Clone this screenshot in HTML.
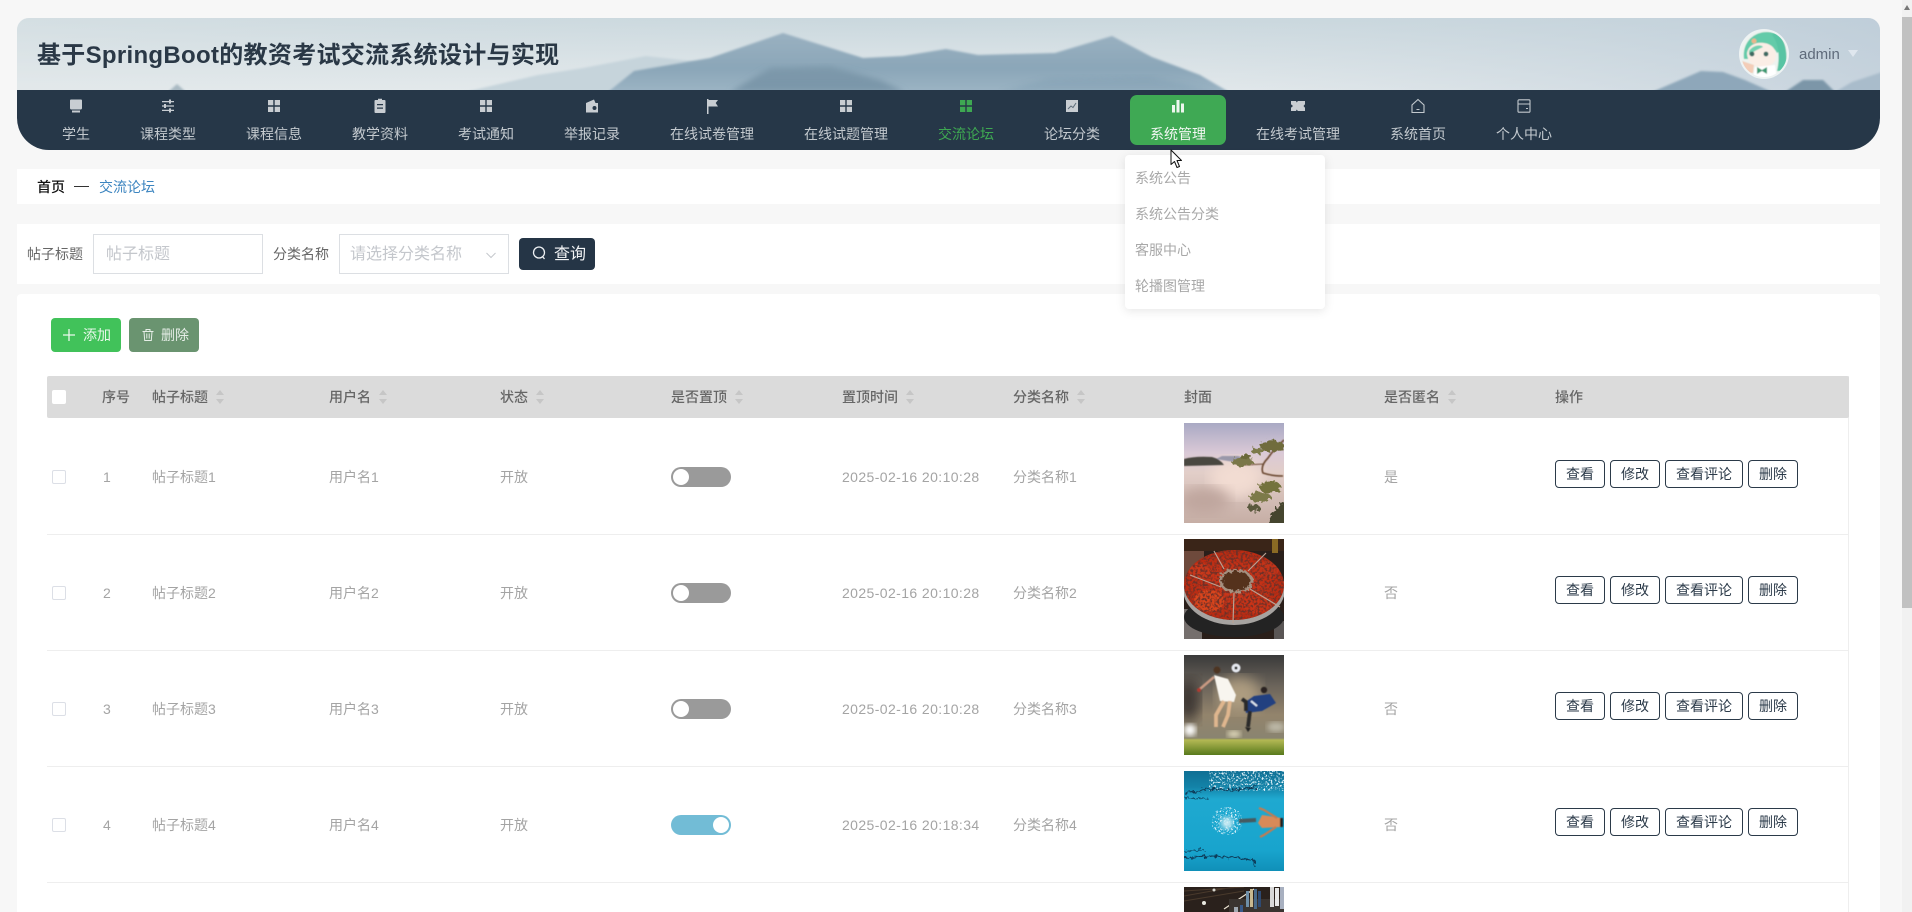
<!DOCTYPE html>
<html lang="zh"><head><meta charset="utf-8"><title>交流论坛</title>
<style>
*{box-sizing:border-box;margin:0;padding:0}
html,body{width:1912px;height:912px;overflow:hidden;background:#f7f7f7}
body{position:relative;font:14px/20px "Liberation Sans","Noto Sans CJK SC",sans-serif;color:#999}
.a{position:absolute;white-space:nowrap}
.card{position:absolute;left:17px;width:1863px;background:#fff}
.nav{position:absolute;top:95px;height:50px;text-align:center;color:#c3c9ce;font-size:14px;line-height:20px;white-space:nowrap}
.nav span{position:absolute;left:0;right:0;top:29px}
.nav svg{position:absolute;left:50%;margin-left:-8px;top:3px;width:16px;height:16px;fill:#c8cdd2;stroke:none}
.th{position:absolute;top:0;height:42px;line-height:42px;font-weight:500;color:#666;white-space:nowrap}
.th i{position:absolute;top:14px;width:8px;height:14px}
.th i:before,.th i:after{content:"";position:absolute;left:0;border:4px solid transparent}
.th i:before{border-bottom:5px solid #c6c6c6;border-top-width:0;top:0}
.th i:after{bottom:0;border-top:5px solid #c6c6c6;border-bottom-width:0}
.row{position:absolute;left:47px;width:1802px;height:117px;border-bottom:1px solid #eee}
.t{position:absolute;top:49px;line-height:20px;color:#a4a4a4;white-space:nowrap}
.d{letter-spacing:.4px}
.cb{position:absolute;left:5px;top:52px;width:14px;height:14px;border:1px solid #dcdfe6;border-radius:2px;background:#fff}
.sw{position:absolute;left:624px;top:49px;width:60px;height:20px;border-radius:10px;background:#9a9a9a}
.sw:after{content:"";position:absolute;left:2px;top:2px;width:16px;height:16px;border-radius:50%;background:#fff}
.sw.on{background:#72bcd6}
.sw.on:after{left:42px}
.pic{position:absolute;left:1137px;top:5px;width:100px;height:100px;display:block}
.b{position:absolute;top:42px;height:28px;line-height:26px;text-align:center;border:1px solid #2b3a49;border-radius:4px;background:#fff;color:#2b3a49;white-space:nowrap}
.dd{position:absolute;left:1135px;color:#a8a8a8;white-space:nowrap;line-height:20px}
</style></head><body>

<svg width="0" height="0" style="position:absolute;left:0;top:0">
<defs>
<filter id="rough" x="-10%" y="-10%" width="120%" height="120%"><feTurbulence type="fractalNoise" baseFrequency=".28" numOctaves="2" seed="3" result="n"/><feDisplacementMap in="SourceGraphic" in2="n" scale="7"/></filter>
<filter id="speckD" x="0" y="0" width="100%" height="100%"><feTurbulence type="fractalNoise" baseFrequency=".42" numOctaves="2" seed="8"/><feColorMatrix values="0 0 0 0 .16  0 0 0 0 .03  0 0 0 0 .02  0 0 0 4 -1.7"/></filter>
<filter id="speckW" x="0" y="0" width="100%" height="100%"><feTurbulence type="fractalNoise" baseFrequency=".55" numOctaves="2" seed="5"/><feColorMatrix values="0 0 0 0 .85  0 0 0 0 .95  0 0 0 0 1  0 0 0 5 -2.6"/></filter>
<filter id="soft"><feGaussianBlur stdDeviation=".45"/></filter>
<filter id="soft3"><feGaussianBlur stdDeviation="3"/></filter>
<filter id="soft7"><feGaussianBlur stdDeviation="7"/></filter>
</defs>
</svg>

<!-- header -->
<div class="a" style="left:17px;top:18px;width:1863px;height:132px;border-radius:12px 12px 32px 32px;overflow:hidden">
<svg width="1863" height="72" viewBox="17 18 1863 72" style="position:absolute;left:0;top:0;display:block">
<defs>
<linearGradient id="sky" x1="0" y1="0" x2="0" y2="1"><stop offset="0" stop-color="#c9d7dd"/><stop offset=".55" stop-color="#d9e2e6"/><stop offset="1" stop-color="#e6ebed"/></linearGradient>
<linearGradient id="skyH" x1="0" y1="0" x2="1" y2="0"><stop offset="0" stop-color="#dfe6e8" stop-opacity=".5"/><stop offset=".5" stop-color="#d6e0e4" stop-opacity="0"/><stop offset="1" stop-color="#bccbd8" stop-opacity=".75"/></linearGradient>
<linearGradient id="mt" x1="0" y1="0" x2="0" y2="1"><stop offset="0" stop-color="#9ab1c1"/><stop offset=".6" stop-color="#8ba6b8"/><stop offset="1" stop-color="#9cb4c4"/></linearGradient>
<linearGradient id="mt2" x1="0" y1="0" x2="0" y2="1"><stop offset="0" stop-color="#7f9aac"/><stop offset="1" stop-color="#6f8ca0" stop-opacity=".7"/></linearGradient>
<filter id="bl"><feGaussianBlur stdDeviation="1"/></filter>
</defs>
<rect x="17" y="18" width="1863" height="72" fill="url(#sky)"/>
<rect x="17" y="18" width="1863" height="72" fill="url(#skyH)"/>
<polygon points="465,92 538,75 583,68 646,56 700,62 760,92" fill="#c6d4db" filter="url(#bl)"/>
<polygon points="608,92 634,71 710,58 783,33 863,58 903,56 946,49 978,55 1055,53 1112,36 1152,57 1200,75 1229,92" fill="url(#mt)" filter="url(#bl)"/>
<polygon points="730,92 770,68 830,66 880,80 905,92" fill="url(#mt2)" filter="url(#soft3)"/>
<polygon points="1000,92 1050,78 1150,76 1215,92" fill="#7d9bb0" opacity=".4" filter="url(#soft3)"/>
<polygon points="168,92 177,84 186,92" fill="#a9b9c2" filter="url(#bl)"/>
<polygon points="1835,92 1852,82 1882,72 1882,92" fill="#a9bccb" filter="url(#bl)"/>
<polygon points="1652,92 1680,80 1701,71 1723,72 1745,80 1772,92" fill="#8ea7ba" filter="url(#bl)"/>
<polygon points="1785,92 1803,80 1823,80 1835,92" fill="#7c96a8" filter="url(#bl)"/>
</svg>
<div style="position:absolute;left:0;top:72px;width:1863px;height:60px;background:#263748"></div>
</div>
<div class="a" style="left:37px;top:39px;font-size:24px;line-height:34px;font-weight:700;color:#2a3846;letter-spacing:.3px">基于SpringBoot的教资考试交流系统设计与实现</div>

<!-- avatar -->
<svg class="a" style="left:1739px;top:29px" width="50" height="50" viewBox="0 0 50 50">
<defs><clipPath id="av"><circle cx="25" cy="25" r="23"/></clipPath></defs>
<circle cx="25" cy="25" r="25" fill="#eef3f3"/>
<g clip-path="url(#av)"><g filter="url(#soft)">
<rect width="50" height="50" fill="#eef3ef"/>
<path d="M5 30C3 14 14 3 28 3C38 3 44 8 46 18L38 24C34 16 26 14 20 15C12 17 9 24 9 30Z" fill="#63cba9"/>
<path d="M36 3C46 8 50 24 46 42L38 42C41 30 40 14 33 6Z" fill="#58c4a3"/>
<path d="M8 24C10 15 18 13 25 14C33 15 37 20 37 27C37 34 31 38 23 38C14 38 8 32 8 24Z" fill="#fbeee6"/>
<path d="M10 22C14 16 22 15 24 18C20 20 15 22 10 26Z" fill="#72d0b0"/>
<circle cx="13" cy="25" r="2.400" fill="#3e6a62"/><circle cx="27" cy="25" r="2.400" fill="#3e6a62"/>
<path d="M3 32L15 36 14 44 6 44Z" fill="#f3cdb8"/>
<path d="M16 38L36 36 38 50 14 50Z" fill="#fff"/>
<path d="M18 38L23 41 28 38 28 45 23 42 18 45Z" fill="#3c9a72"/>
<circle cx="15" cy="12" r="2.500" fill="#e9b58b"/>
</g></g></svg>
<div class="a" style="left:1799px;top:45px;font-size:15px;line-height:20px;color:#5f6b7b">admin</div>
<div class="a" style="left:1848px;top:50px;width:0;height:0;border-left:5px solid transparent;border-right:5px solid transparent;border-top:7px solid #dfe7ee"></div>

<!-- nav -->
<div class="nav" style="left:42px;width:68px"><svg viewBox="0 0 16 16"><path d="M3 1.500h10a1 1 0 0 1 1 1V10a1.500 1.500 0 0 1-1.500 1.500h-9A1.500 1.500 0 0 1 2 10V2.500a1 1 0 0 1 1-1zM4 12.500h8V14.500H4z"/></svg><span>学生</span></div>
<div class="nav" style="left:120px;width:96px"><svg viewBox="0 0 16 16"><path d="M2 3h7V1.500h2V3h3v1.200h-3v1.400H9V4.200H2zM2 7.400h2V6h2v1.400h8v1.200H6V10H4V8.600H2zM2 11.800h7v-1.400h2v1.400h3V13h-3v1.500H9V13H2z"/></svg><span>课程类型</span></div>
<div class="nav" style="left:226px;width:96px"><svg viewBox="0 0 16 16"><path d="M2 2h5.300v5.300H2zM8.700 2H14v5.300H8.700zM2 8.700h5.300V14H2zM8.700 8.700H14V14H8.700z"/></svg><span>课程信息</span></div>
<div class="nav" style="left:332px;width:96px"><svg viewBox="0 0 16 16"><path fill-rule="evenodd" d="M6 .8h4V2h2.500A1 1 0 0 1 13.500 3v11a1 1 0 0 1-1 1h-9a1 1 0 0 1-1-1V3a1 1 0 0 1 1-1H6zM5 6v1.200h6V6zM5 9.500v1.200h6V9.500z"/></svg><span>教学资料</span></div>
<div class="nav" style="left:438px;width:96px"><svg viewBox="0 0 16 16"><path d="M2 2h5.300v5.300H2zM8.700 2H14v5.300H8.700zM2 8.700h5.300V14H2zM8.700 8.700H14V14H8.700z"/></svg><span>考试通知</span></div>
<div class="nav" style="left:544px;width:96px"><svg viewBox="0 0 16 16"><path fill-rule="evenodd" d="M2 5l8-3.500 1.500 3.500H14v9.500H2zM10.500 8a2 2 0 1 0 0 4 2 2 0 0 0 0-4z"/></svg><span>举报记录</span></div>
<div class="nav" style="left:650px;width:124px"><svg viewBox="0 0 16 16"><path d="M3 1h1.500v1H14l-2.300 3L14 8.500H4.500V16H3z"/></svg><span>在线试卷管理</span></div>
<div class="nav" style="left:784px;width:124px"><svg viewBox="0 0 16 16"><path d="M2 2h5.300v5.300H2zM8.700 2H14v5.300H8.700zM2 8.700h5.300V14H2zM8.700 8.700H14V14H8.700z"/></svg><span>在线试题管理</span></div>
<div class="nav" style="left:918px;width:96px;color:#3ea852"><svg viewBox="0 0 16 16" style="fill:#3ea852"><path d="M2 2h5.300v5.300H2zM8.700 2H14v5.300H8.700zM2 8.700h5.300V14H2zM8.700 8.700H14V14H8.700z"/></svg><span>交流论坛</span></div>
<div class="nav" style="left:1024px;width:96px"><svg viewBox="0 0 16 16"><path d="M2 2h12v12H2z"/><path d="M4 11l3-3 2 1.500L12 5" fill="none" stroke="#5d6c79" stroke-width="1"/></svg><span>论坛分类</span></div>
<div class="nav" style="left:1130px;width:96px;background:#3fa954;border-radius:7px;color:#f2f7f2"><svg viewBox="0 0 16 16" style="fill:#eef6ee"><path d="M2 7h3v7.500H2zM6.500 2h3v12.500h-3zM11 5.500h3v9h-3z"/></svg><span>系统管理</span></div>
<div class="nav" style="left:1250px;width:96px"><svg viewBox="0 0 16 16"><path d="M1 3h5l.8 1.500L7.800 3H15v3.200l-1.500 1.800L15 9.800V13H7.800l-1-1.500L6 13H1V9.800L3 8 1 6.200z"/></svg><span>在线考试管理</span></div>
<div class="nav" style="left:1370px;width:96px"><svg viewBox="0 0 16 16" style="fill:none;stroke:#c3c9ce;stroke-width:1.100"><path d="M8 1.500L14 7v7.500H2V7zM6.500 11.500h3"/></svg><span>系统首页</span></div>
<div class="nav" style="left:1476px;width:96px"><svg viewBox="0 0 16 16" style="fill:none;stroke:#c3c9ce;stroke-width:1.100"><path d="M3 1.800h10a1 1 0 0 1 1 1V13.200a1 1 0 0 1-1 1H3a1 1 0 0 1-1-1V2.800a1 1 0 0 1 1-1zM2 6h12M10 10.500h2"/></svg><span>个人中心</span></div>

<!-- breadcrumb -->
<div class="card" style="top:169px;height:35px"></div>
<div class="a" style="left:37px;top:177px;color:#111;font-weight:500">首页</div>
<div class="a" style="left:74px;top:186px;width:15px;height:1px;background:#333"></div>
<div class="a" style="left:99px;top:177px;color:#3c85c0">交流论坛</div>

<!-- search -->
<div class="card" style="top:224px;height:60px"></div>
<div class="a" style="left:27px;top:244px;color:#666">帖子标题</div>
<div class="a" style="left:93px;top:234px;width:170px;height:40px;border:1px solid #dcdfe3;background:#fff;padding-left:12px;line-height:40px;color:#c4c7cc;font-size:16px">帖子标题</div>
<div class="a" style="left:273px;top:244px;color:#666">分类名称</div>
<div class="a" style="left:339px;top:234px;width:170px;height:40px;border:1px solid #dcdfe3;background:#fff;padding-left:10px;line-height:40px;color:#c4c7cc;font-size:16px">请选择分类名称</div>
<svg class="a" style="left:485px;top:249px" width="12" height="12" viewBox="0 0 12 12"><path d="M1.500 4L6 8.500 10.500 4" fill="none" stroke="#c4c7cc" stroke-width="1"/></svg>
<div class="a" style="left:519px;top:238px;width:76px;height:32px;background:#253546;border-radius:4px"></div>
<svg class="a" style="left:532px;top:245px" width="15" height="16" viewBox="0 0 15 16"><circle cx="7" cy="7.500" r="5.500" fill="none" stroke="#eef1f4" stroke-width="1.300"/><path d="M10.500 11.500l2 2.500" stroke="#eef1f4" stroke-width="1.300"/></svg>
<div class="a" style="left:554px;top:244px;color:#f2f4f6;font-size:16px;line-height:22px">查询</div>

<!-- main -->
<div class="card" style="top:294px;height:618px;border-radius:4px 4px 0 0"></div>
<div class="a" style="left:51px;top:318px;width:70px;height:34px;background:#41c25a;border-radius:4px"></div>
<svg class="a" style="left:62px;top:328px" width="14" height="14" viewBox="0 0 14 14"><path d="M7 1v12M1 7h12" stroke="#eaf8ec" stroke-width="1.300"/></svg>
<div class="a" style="left:83px;top:325px;color:#e8f7ea;font-size:14px">添加</div>
<div class="a" style="left:129px;top:318px;width:70px;height:34px;background:#6a9470;border-radius:4px"></div>
<svg class="a" style="left:141px;top:328px" width="14" height="14" viewBox="0 0 14 14" fill="none" stroke="#e6eee7" stroke-width="1"><path d="M1.500 3.500h11M5 3.500V1.500h4v2M3 3.500l.7 9h6.600l.7-9M5.800 5.500v5M8.200 5.500v5"/></svg>
<div class="a" style="left:161px;top:325px;color:#e6eee7;font-size:14px">删除</div>

<!-- table -->
<div class="a" style="left:47px;top:376px;width:1802px;height:536px;border-right:1px solid #eee"></div>
<div class="a" style="left:47px;top:376px;width:1802px;height:42px;background:#dbdbdb;border-radius:2px">
<div style="position:absolute;left:5px;top:14px;width:14px;height:14px;background:#fff;border-radius:2px"></div>
<div class="th" style="left:55px">序号</div>
<div class="th" style="left:105px">帖子标题<i style="left:64px"></i></div>
<div class="th" style="left:282px">用户名<i style="left:50px"></i></div>
<div class="th" style="left:453px">状态<i style="left:36px"></i></div>
<div class="th" style="left:624px">是否置顶<i style="left:64px"></i></div>
<div class="th" style="left:795px">置顶时间<i style="left:64px"></i></div>
<div class="th" style="left:966px">分类名称<i style="left:64px"></i></div>
<div class="th" style="left:1137px">封面</div>
<div class="th" style="left:1337px">是否匿名<i style="left:64px"></i></div>
<div class="th" style="left:1508px">操作</div>
</div>

<div class="row" style="top:418px">
<div class="cb"></div><div class="t" style="left:56px">1</div><div class="t" style="left:105px">帖子标题1</div><div class="t" style="left:282px">用户名1</div><div class="t" style="left:453px">开放</div><div class="sw"></div><div class="t d" style="left:795px">2025-02-16 20:10:28</div><div class="t" style="left:966px">分类名称1</div>
<svg class="pic" viewBox="0 0 100 100"><defs><linearGradient id="p1" x1="0" y1="0" x2="0" y2="1"><stop offset="0" stop-color="#a9a9c4"/><stop offset=".3" stop-color="#dac9d6"/><stop offset=".5" stop-color="#e2cec8"/><stop offset="1" stop-color="#c6aea5"/></linearGradient><clipPath id="cp1"><rect width="100" height="100"/></clipPath></defs><g clip-path="url(#cp1)"><rect width="100" height="100" fill="url(#p1)"/><ellipse cx="52" cy="55" rx="26" ry="20" fill="#f2dcd2" filter="url(#soft7)"/><ellipse cx="20" cy="78" rx="26" ry="14" fill="#bfa69e" filter="url(#soft7)"/><g filter="url(#soft)"><path d="M32 36l6-3 16 0 10 3-14 3Z" fill="#9a98aa"/><path d="M0 36Q10 33 28 34Q36 36 40 42L0 43Z" fill="#484640"/><path d="M100 17Q90 26 84 35Q76 43 79 50Q88 53 99 53" fill="none" stroke="#6c4a33" stroke-width="1.600"/><path d="M80 41L60 42" stroke="#6c4a33" stroke-width="1"/></g><g filter="url(#rough)"><ellipse cx="88" cy="23" rx="12" ry="6" fill="#6f6c3c"/><ellipse cx="74" cy="28" rx="7" ry="3" fill="#7c7948"/><ellipse cx="58" cy="39" rx="11" ry="4" fill="#7a7748"/><ellipse cx="62" cy="34" rx="6" ry="2.500" fill="#6a6838"/><ellipse cx="86" cy="64" rx="11" ry="6" fill="#73723d"/><ellipse cx="76" cy="74" rx="11" ry="5" fill="#7c7a48"/><ellipse cx="70" cy="85" rx="6" ry="4" fill="#5a583c"/><path d="M84 102Q88 84 102 78V102Z" fill="#45452f"/></g></g></svg>
<div class="t" style="left:1337px">是</div>
<div class="b" style="left:1508px;width:50px">查看</div><div class="b" style="left:1563px;width:50px">修改</div><div class="b" style="left:1618px;width:78px">查看评论</div><div class="b" style="left:1701px;width:50px">删除</div>
</div>

<div class="row" style="top:534px">
<div class="cb"></div><div class="t" style="left:56px">2</div><div class="t" style="left:105px">帖子标题2</div><div class="t" style="left:282px">用户名2</div><div class="t" style="left:453px">开放</div><div class="sw"></div><div class="t d" style="left:795px">2025-02-16 20:10:28</div><div class="t" style="left:966px">分类名称2</div>
<svg class="pic" viewBox="0 0 100 100"><defs><radialGradient id="p2" cx=".5" cy=".5" r=".55"><stop offset="0" stop-color="#cf3a1e"/><stop offset="1" stop-color="#b8280f"/></radialGradient><clipPath id="cp2"><ellipse cx="50" cy="46" rx="50" ry="35"/></clipPath></defs><rect width="100" height="100" fill="#2a1f1a"/><rect width="100" height="12" fill="#3a2518"/><rect x="88" width="6" height="14" fill="#8a6a24"/><rect y="12" width="20" height="30" fill="#6e4a3c"/><rect y="70" width="18" height="30" fill="#756f6d"/><rect x="90" y="82" width="10" height="18" fill="#5a5655"/><ellipse cx="50" cy="78" rx="50" ry="20" fill="#232323"/><ellipse cx="50" cy="50" rx="51" ry="36" fill="#a6a3a0"/><ellipse cx="50" cy="46" rx="50" ry="35" fill="url(#p2)"/><g clip-path="url(#cp2)"><ellipse cx="25" cy="62" rx="15" ry="11" fill="#d9441c"/><ellipse cx="74" cy="65" rx="15" ry="10" fill="#c93317"/><ellipse cx="16" cy="32" rx="11" ry="8" fill="#c9371a"/><ellipse cx="84" cy="30" rx="11" ry="8" fill="#c43318"/><rect width="100" height="100" filter="url(#speckD)"/></g><g filter="url(#rough)"><ellipse cx="52" cy="42" rx="17" ry="12" fill="#a4907f"/><ellipse cx="52" cy="42" rx="14" ry="10" fill="#55301f"/></g><path d="M50 54L49 84M66 50L96 68M37 48L6 36M64 32L82 14M40 30L30 12" stroke="#b9a193" stroke-width="1.200" fill="none"/></svg>
<div class="t" style="left:1337px">否</div>
<div class="b" style="left:1508px;width:50px">查看</div><div class="b" style="left:1563px;width:50px">修改</div><div class="b" style="left:1618px;width:78px">查看评论</div><div class="b" style="left:1701px;width:50px">删除</div>
</div>

<div class="row" style="top:650px">
<div class="cb"></div><div class="t" style="left:56px">3</div><div class="t" style="left:105px">帖子标题3</div><div class="t" style="left:282px">用户名3</div><div class="t" style="left:453px">开放</div><div class="sw"></div><div class="t d" style="left:795px">2025-02-16 20:10:28</div><div class="t" style="left:966px">分类名称3</div>
<svg class="pic" viewBox="0 0 100 100"><defs><linearGradient id="p3" x1="0" y1="0" x2="0" y2="1"><stop offset="0" stop-color="#3a3a3a"/><stop offset=".3" stop-color="#6a635a"/><stop offset=".6" stop-color="#93846c"/><stop offset=".83" stop-color="#8a8470"/><stop offset=".85" stop-color="#b3b854"/><stop offset="1" stop-color="#587a1c"/></linearGradient><clipPath id="cp3"><rect width="100" height="100"/></clipPath></defs><g clip-path="url(#cp3)"><rect width="100" height="100" fill="url(#p3)"/><ellipse cx="4" cy="45" rx="12" ry="22" fill="#3a3530" filter="url(#soft7)"/><ellipse cx="55" cy="40" rx="22" ry="18" fill="#ad9c80" filter="url(#soft7)"/><ellipse cx="6" cy="75" rx="6" ry="6" fill="#fff" filter="url(#soft3)"/><ellipse cx="50" cy="79" rx="7" ry="3" fill="#efe8c8" filter="url(#soft3)"/><ellipse cx="92" cy="72" rx="9" ry="5" fill="#bdb9a8" filter="url(#soft3)"/><g filter="url(#soft)"><circle cx="52" cy="13" r="4.500" fill="#e6e9f0"/><circle cx="52" cy="13" r="1.500" fill="#222"/><circle cx="33" cy="15" r="3.500" fill="#4e3424"/><path d="M30 20L44 24 52 40 50 47 36 46Z" fill="#f8f5ef"/><path d="M30 22L16 34" stroke="#c99a82" stroke-width="2.500"/><circle cx="15" cy="35" r="2" fill="#b03a30"/><path d="M40 46L32 60 32 72M46 46L44 60 39 72" stroke="#dfb68e" stroke-width="3.800" fill="none"/><circle cx="80" cy="35" r="3.200" fill="#2a2420"/><path d="M70 41L86 39 92 48 78 56 62 58 60 48Z" fill="#233f80"/><path d="M67 46l6 5" stroke="#dfe6f0" stroke-width="2"/><path d="M62 56L62 47 58 44M66 56L64 72" stroke="#2a2a2a" stroke-width="3.800" fill="none"/><path d="M61 72l6 1-3 4z" fill="#222"/></g></g></svg>
<div class="t" style="left:1337px">否</div>
<div class="b" style="left:1508px;width:50px">查看</div><div class="b" style="left:1563px;width:50px">修改</div><div class="b" style="left:1618px;width:78px">查看评论</div><div class="b" style="left:1701px;width:50px">删除</div>
</div>

<div class="row" style="top:766px">
<div class="cb"></div><div class="t" style="left:56px">4</div><div class="t" style="left:105px">帖子标题4</div><div class="t" style="left:282px">用户名4</div><div class="t" style="left:453px">开放</div><div class="sw on"></div><div class="t d" style="left:795px">2025-02-16 20:18:34</div><div class="t" style="left:966px">分类名称4</div>
<svg class="pic" viewBox="0 0 100 100"><defs><linearGradient id="p4" x1="0" y1="0" x2="0" y2="1"><stop offset="0" stop-color="#0f6f94"/><stop offset=".16" stop-color="#1383a8"/><stop offset=".28" stop-color="#1fa9d0"/><stop offset=".8" stop-color="#18a4cd"/><stop offset="1" stop-color="#1090b8"/></linearGradient><clipPath id="cp4a"><rect x="25" width="75" height="20"/></clipPath><clipPath id="cp4b"><ellipse cx="43" cy="50" rx="16" ry="14"/></clipPath></defs><rect width="100" height="100" fill="url(#p4)"/><g clip-path="url(#cp4a)"><rect width="100" height="100" filter="url(#speckW)"/></g><g clip-path="url(#cp4b)"><rect width="100" height="100" filter="url(#speckW)"/></g><ellipse cx="43" cy="52" rx="6" ry="6" fill="#d2eef5" filter="url(#soft3)"/><g filter="url(#rough)"><path d="M0 22L25 18 45 19 70 17 72 14" stroke="#0c3a58" stroke-width="1.500" fill="none"/><path d="M0 27L25 28" stroke="#0c4a68" stroke-width="1.100" fill="none"/><path d="M0 87L25 85 50 87 70 89 71 96" stroke="#0c3a58" stroke-width="1.500" fill="none"/><path d="M0 80L20 79" stroke="#0c4a68" stroke-width="1" fill="none"/></g><g filter="url(#soft)"><path d="M55 50L72 49" stroke="#455a60" stroke-width="4"/><path d="M78 44L97 47 96 56 78 57 74 52Z" fill="#d88a58"/><path d="M93 47L80 39 75 37M92 56L80 64 76 66" stroke="#c47a50" stroke-width="2.200" fill="none"/><rect x="96" y="47" width="3" height="9" fill="#222"/></g></svg>
<div class="t" style="left:1337px">否</div>
<div class="b" style="left:1508px;width:50px">查看</div><div class="b" style="left:1563px;width:50px">修改</div><div class="b" style="left:1618px;width:78px">查看评论</div><div class="b" style="left:1701px;width:50px">删除</div>
</div>

<svg class="a" style="left:1184px;top:887px" width="100" height="25" viewBox="0 0 100 25"><rect width="100" height="25" fill="#2a211c"/><path d="M0 4L60 0M0 9L50 0M0 14L60 4" stroke="#4a3a2c" stroke-width="1"/><path d="M40 22L70 2" stroke="#e8e0d0" stroke-width="1.200"/><circle cx="20" cy="16" r="2" fill="#e8e8e0"/><circle cx="30" cy="3" r="1.500" fill="#d8d8d0"/><rect x="45" y="12" width="55" height="13" fill="#3a3430"/><rect x="62" y="4" width="3" height="16" fill="#6f8fa8"/><rect x="66" y="2" width="3" height="18" fill="#c8b890"/><rect x="70" y="2" width="3" height="20" fill="#486888"/><rect x="74" y="4" width="3" height="16" fill="#2e4a72"/><rect x="86" width="4" height="20" fill="#d8d8d8"/><rect x="91" y="1" width="4" height="18" fill="#e8e8e8"/><rect x="96" width="4" height="22" fill="#a8b0c0"/><rect x="50" y="20" width="4" height="5" fill="#a0a8b0"/><rect x="56" y="18" width="3" height="7" fill="#3a5a8a"/></svg>

<!-- dropdown -->
<div class="a" style="left:1125px;top:155px;width:200px;height:154px;background:#fff;border-radius:4px;box-shadow:0 2px 10px rgba(0,0,0,.1)"></div>
<div class="dd" style="top:168px">系统公告</div>
<div class="dd" style="top:204px">系统公告分类</div>
<div class="dd" style="top:240px">客服中心</div>
<div class="dd" style="top:276px">轮播图管理</div>

<!-- cursor -->
<svg class="a" style="left:1170px;top:149px" width="14" height="20" viewBox="0 0 14 20"><path d="M1 1V15.500L4.500 12.500 7 18.500 9.500 17.500 7 11.500H11.500Z" fill="#fff" stroke="#111" stroke-width="1" stroke-linejoin="round"/></svg>

<!-- scrollbar -->
<div class="a" style="left:1902px;top:0;width:10px;height:912px;background:#f1f1f1"></div>
<div class="a" style="left:1902px;top:17px;width:10px;height:591px;background:#c1c1c1"></div>
<div class="a" style="left:1904px;top:5px;width:0;height:0;border-left:3px solid transparent;border-right:3px solid transparent;border-bottom:5px solid #777"></div>
</body></html>
